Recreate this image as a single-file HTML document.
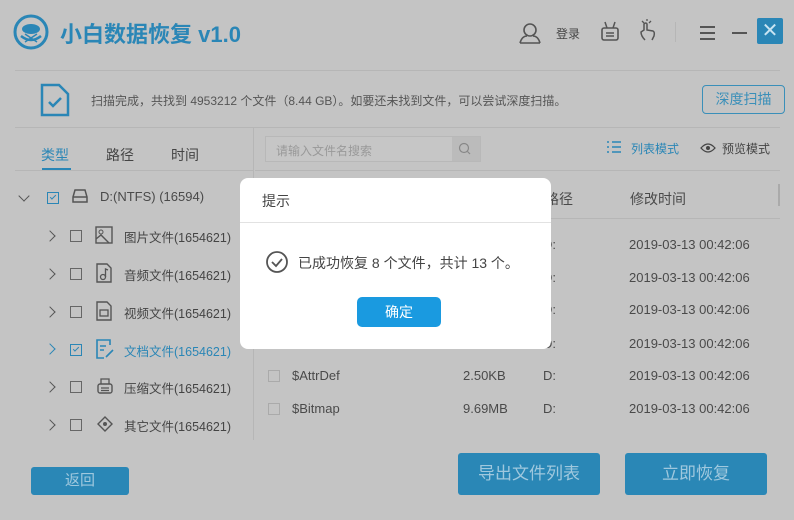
<!DOCTYPE html>
<html><head><meta charset="utf-8"><style>
*{margin:0;padding:0;box-sizing:border-box}
body{width:794px;height:520px;background:#c4c4c4;font-family:"Liberation Sans","Noto Sans CJK SC",sans-serif;position:relative;overflow:hidden;color:#555}
.a{position:absolute;white-space:nowrap}
.ln{position:absolute;background:#b6b6b6}
.cb{position:absolute;width:12px;height:12px;border:1px solid #666;background:#c4c4c4}
.chev{position:absolute;width:8px;height:8px;border-right:1.5px solid #555;border-bottom:1.5px solid #555;transform:rotate(-45deg)}
.t{font-size:13px;color:#4a4a4a}
.btn{position:absolute;background:#2a87b6;color:#9fc8de;font-size:17px;text-align:center;border-radius:3px}
</style></head><body>
<!-- logo -->
<svg class="a" style="left:13px;top:14px" width="36" height="36" viewBox="0 0 36 36"><circle cx="18" cy="18" r="16" fill="none" stroke="#2a86b6" stroke-width="3"/><ellipse cx="18" cy="15" rx="9" ry="5" fill="#2a86b6"/><path d="M8 22 Q18 30 28 22" fill="none" stroke="#2a86b6" stroke-width="2.5"/><path d="M12 28 L24 20 M24 28 L12 20" stroke="#2a86b6" stroke-width="1.5"/></svg>
<div class="a" style="left:60px;top:17px;font-size:22px;font-weight:bold;color:#2a86b6">小白数据恢复 v1.0</div>
<!-- top right icons -->
<svg class="a" style="left:518px;top:22px" width="26" height="22" viewBox="0 0 26 22"><circle cx="12" cy="8" r="6" fill="none" stroke="#555" stroke-width="1.6"/><path d="M2 21 Q4 14 9 14 M15 14 Q20 14 22 21 M2 21 H22" fill="none" stroke="#555" stroke-width="1.6"/></svg>
<div class="a" style="left:556px;top:25px;font-size:12px;color:#444">登录</div>
<svg class="a" style="left:599px;top:20px" width="22" height="22" viewBox="0 0 22 22"><rect x="3" y="8" width="16" height="12" rx="2" fill="none" stroke="#555" stroke-width="1.6"/><path d="M6 2 L8 8 M16 2 L14 8 M7 13 H15 M7 16 H15" stroke="#555" stroke-width="1.5"/></svg>
<svg class="a" style="left:638px;top:18px" width="20" height="24" viewBox="0 0 20 24"><path d="M7 22 Q3 18 3 14 L6 12 V6 Q8 4 9 6 V12 L15 13 Q17 14 16 18 L14 22" fill="none" stroke="#555" stroke-width="1.5"/><path d="M4 3 L6 5 M9 1 V3 M13 3 L11 5" stroke="#555" stroke-width="1.3"/></svg>
<div class="ln" style="left:675px;top:22px;width:1px;height:20px"></div>
<div class="a" style="left:700px;top:32px;width:15px;height:2px;background:#555;box-shadow:0 -6px 0 #555,0 6px 0 #555"></div>
<div class="a" style="left:732px;top:32px;width:15px;height:2px;background:#555"></div>
<div class="a" style="left:757px;top:18px;width:26px;height:26px;background:#2a86b6;border-radius:2px;color:#c8e4f2;font-size:20px;text-align:center;line-height:26px">✕</div>
<div class="ln" style="left:15px;top:70px;width:765px;height:1px"></div>
<!-- banner -->
<svg class="a" style="left:40px;top:83px" width="30" height="34" viewBox="0 0 30 34"><path d="M2 2 H19 L28 11 V32 H2 Z" fill="none" stroke="#2a86b6" stroke-width="2.5"/><path d="M9 19 L13 23 L21 15" fill="none" stroke="#2a86b6" stroke-width="2.5"/></svg>
<div class="a" style="left:91px;top:92px;font-size:12px;color:#555">扫描完成，共找到 4953212 个文件（8.44 GB）。如要还未找到文件，可以尝试深度扫描。</div>
<div class="a" style="left:702px;top:85px;width:83px;height:29px;border:1px solid #3a8fb9;border-radius:4px;color:#3a8fb9;font-size:14px;text-align:center;line-height:27px">深度扫描</div>
<div class="ln" style="left:15px;top:127px;width:765px;height:1px"></div>
<!-- tabs -->
<div class="a" style="left:41px;top:145px;font-size:14px;color:#2a86b6">类型</div>
<div class="a" style="left:42px;top:168px;width:29px;height:2px;background:#2a86b6"></div>
<div class="a" style="left:106px;top:145px;font-size:14px;color:#444">路径</div>
<div class="a" style="left:171px;top:145px;font-size:14px;color:#444">时间</div>
<div class="ln" style="left:15px;top:170px;width:238px;height:1px"></div>
<div class="ln" style="left:253px;top:128px;width:1px;height:312px"></div>
<!-- search -->
<div class="a" style="left:265px;top:136px;width:216px;height:26px;border:1px solid #b8b8b8;background:#c6c6c6"></div>
<div class="a" style="left:452px;top:137px;width:28px;height:24px;background:#bbbbbb"></div>
<svg class="a" style="left:458px;top:142px" width="14" height="14" viewBox="0 0 14 14"><circle cx="6" cy="6" r="4.5" fill="none" stroke="#888" stroke-width="1.2"/><path d="M9.5 9.5 L12 12" stroke="#888" stroke-width="1.2"/></svg>
<div class="a" style="left:276px;top:142px;font-size:12px;color:#999">请输入文件名搜索</div>
<svg class="a" style="left:606px;top:139px" width="16" height="16" viewBox="0 0 16 16"><path d="M1 3 H3 M1 8 H3 M1 13 H3 M6 3 H15 M6 8 H15 M6 13 H15" stroke="#2a86b6" stroke-width="1.6"/></svg>
<div class="a" style="left:631px;top:140px;font-size:12px;color:#2a86b6">列表模式</div>
<svg class="a" style="left:700px;top:142px" width="16" height="12" viewBox="0 0 16 12"><path d="M1 6 Q8 -2 15 6 Q8 14 1 6 Z" fill="none" stroke="#444" stroke-width="1.3"/><circle cx="8" cy="6" r="2" fill="#444"/></svg>
<div class="a" style="left:722px;top:140px;font-size:12px;color:#444">预览模式</div>
<div class="ln" style="left:255px;top:170px;width:525px;height:1px"></div>
<!-- tree -->
<div class="chev" style="left:20px;top:192px;transform:rotate(45deg)"></div>
<div class="cb" style="left:47px;top:192px;border-color:#2a86b6"><div style="width:6px;height:3px;border-left:1.5px solid #2a86b6;border-bottom:1.5px solid #2a86b6;transform:rotate(-45deg);margin:2px 0 0 2px"></div></div>
<svg class="a" style="left:71px;top:188px" width="18" height="16" viewBox="0 0 18 16"><path d="M2 9 L4 2 H14 L16 9 V14 H2 Z M2 9 H16" fill="none" stroke="#555" stroke-width="1.5"/></svg>
<div class="a t" style="left:100px;top:189px">D:(NTFS) (16594)</div>
<div class="chev" style="left:46px;top:232px"></div><div class="cb" style="left:70px;top:230px"></div>
<svg class="a" style="left:95px;top:226px" width="18" height="18" viewBox="0 0 18 18"><rect x="1" y="1" width="16" height="16" fill="none" stroke="#555" stroke-width="1.4"/><circle cx="6" cy="6" r="2" fill="none" stroke="#555"/><path d="M1 13 L6 9 L14 17" fill="none" stroke="#555" stroke-width="1.4"/></svg>
<div class="a" style="left:124px;top:227px;font-size:12.5px;color:#444">图片文件(1654621)</div>
<div class="chev" style="left:46px;top:270px"></div><div class="cb" style="left:70px;top:268px"></div>
<svg class="a" style="left:96px;top:263px" width="16" height="20" viewBox="0 0 16 20"><path d="M1 1 H11 L15 5 V19 H1 Z" fill="none" stroke="#555" stroke-width="1.4"/><circle cx="7" cy="14" r="2.5" fill="none" stroke="#555" stroke-width="1.3"/><path d="M9.5 14 V6 L12 7" fill="none" stroke="#555" stroke-width="1.3"/></svg>
<div class="a" style="left:124px;top:265px;font-size:12.5px;color:#444">音频文件(1654621)</div>
<div class="chev" style="left:46px;top:308px"></div><div class="cb" style="left:70px;top:306px"></div>
<svg class="a" style="left:96px;top:301px" width="16" height="20" viewBox="0 0 16 20"><path d="M1 1 H11 L15 5 V19 H1 Z" fill="none" stroke="#555" stroke-width="1.4"/><rect x="4" y="9" width="8" height="6" fill="none" stroke="#555" stroke-width="1.3"/></svg>
<div class="a" style="left:124px;top:303px;font-size:12.5px;color:#444">视频文件(1654621)</div>
<div class="chev" style="left:46px;top:345px;border-color:#2a86b6"></div>
<div class="cb" style="left:70px;top:344px;border-color:#2a86b6"><div style="width:6px;height:3px;border-left:1.5px solid #2a86b6;border-bottom:1.5px solid #2a86b6;transform:rotate(-45deg);margin:2px 0 0 2px"></div></div>
<svg class="a" style="left:96px;top:339px" width="18" height="20" viewBox="0 0 18 20"><path d="M14 6 V1 H1 V19 H8" fill="none" stroke="#2a86b6" stroke-width="1.6"/><path d="M4 7 H10 M4 11 H8 M10 18 L17 11" stroke="#2a86b6" stroke-width="1.6"/></svg>
<div class="a" style="left:124px;top:341px;font-size:12.5px;color:#2a86b6">文档文件(1654621)</div>
<div class="chev" style="left:46px;top:383px"></div><div class="cb" style="left:70px;top:381px"></div>
<svg class="a" style="left:96px;top:377px" width="18" height="18" viewBox="0 0 18 18"><rect x="2" y="7" width="14" height="9" rx="2" fill="none" stroke="#555" stroke-width="1.4"/><path d="M5 7 V2 H13 V7 M5 11 H13 M5 13.5 H13" stroke="#555" stroke-width="1.3" fill="none"/></svg>
<div class="a" style="left:124px;top:378px;font-size:12.5px;color:#444">压缩文件(1654621)</div>
<div class="chev" style="left:46px;top:421px"></div><div class="cb" style="left:70px;top:419px"></div>
<svg class="a" style="left:97px;top:416px" width="16" height="16" viewBox="0 0 16 16"><path d="M8 1 L15 8 L8 15 L1 8 Z" fill="none" stroke="#555" stroke-width="1.4"/><circle cx="8" cy="8" r="2" fill="#555"/></svg>
<div class="a" style="left:124px;top:416px;font-size:12.5px;color:#444">其它文件(1654621)</div>
<!-- table -->
<div class="a t" style="left:545px;top:189px;font-size:14px">路径</div>
<div class="a t" style="left:630px;top:189px;font-size:14px">修改时间</div>
<div class="a" style="left:778px;top:184px;width:2px;height:22px;background:#aaa"></div>
<div class="ln" style="left:255px;top:218px;width:525px;height:1px"></div>
<div class="a t" style="left:543px;top:237px">D:</div><div class="a t" style="left:629px;top:237px">2019-03-13 00:42:06</div>
<div class="a t" style="left:543px;top:270px">D:</div><div class="a t" style="left:629px;top:270px">2019-03-13 00:42:06</div>
<div class="a t" style="left:543px;top:302px">D:</div><div class="a t" style="left:629px;top:302px">2019-03-13 00:42:06</div>
<div class="a t" style="left:543px;top:336px">D:</div><div class="a t" style="left:629px;top:336px">2019-03-13 00:42:06</div>
<div class="cb" style="left:268px;top:370px;border-color:#aaa"></div>
<div class="a t" style="left:292px;top:368px">$AttrDef</div><div class="a t" style="left:463px;top:368px">2.50KB</div><div class="a t" style="left:543px;top:368px">D:</div><div class="a t" style="left:629px;top:368px">2019-03-13 00:42:06</div>
<div class="cb" style="left:268px;top:403px;border-color:#aaa"></div>
<div class="a t" style="left:292px;top:401px">$Bitmap</div><div class="a t" style="left:463px;top:401px">9.69MB</div><div class="a t" style="left:543px;top:401px">D:</div><div class="a t" style="left:629px;top:401px">2019-03-13 00:42:06</div>
<!-- buttons -->
<div class="btn" style="left:31px;top:467px;width:98px;height:28px;line-height:28px;font-size:15px">返回</div>
<div class="btn" style="left:458px;top:453px;width:142px;height:42px;line-height:42px">导出文件列表</div>
<div class="btn" style="left:625px;top:453px;width:142px;height:42px;line-height:42px">立即恢复</div>
<!-- dialog -->
<div class="a" style="left:240px;top:178px;width:311px;height:171px;background:#fff;border-radius:8px"></div>
<div class="a" style="left:262px;top:191px;font-size:14px;color:#444">提示</div>
<div class="a" style="left:240px;top:222px;width:311px;height:1px;background:#e2e2e2"></div>
<svg class="a" style="left:265px;top:250px" width="24" height="24" viewBox="0 0 24 24"><circle cx="12" cy="12" r="10" fill="none" stroke="#555" stroke-width="1.8"/><path d="M7 12 L11 16 L17 9" fill="none" stroke="#555" stroke-width="1.8"/></svg>
<div class="a" style="left:298px;top:253px;font-size:14px;color:#444">已成功恢复 8 个文件，共计 13 个。</div>
<div class="a" style="left:357px;top:297px;width:84px;height:30px;background:#1a9ae0;border-radius:5px;color:#fff;font-size:14px;text-align:center;line-height:30px">确定</div>
</body></html>
